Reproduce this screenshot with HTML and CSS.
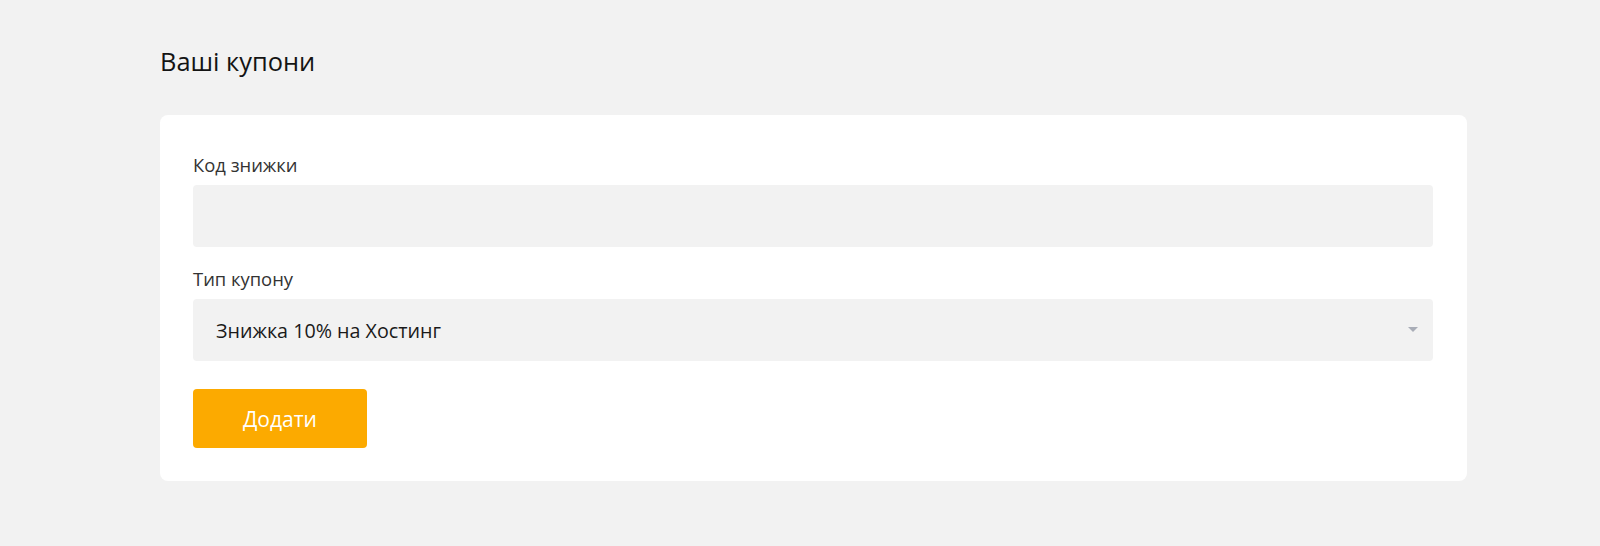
FILE: index.html
```html
<!DOCTYPE html>
<html lang="uk">
<head>
  <meta charset="UTF-8">
  <meta name="viewport" content="width=device-width, initial-scale=1.0">
  <title>Ваші купони</title>
  <link rel="stylesheet" href="styles.css">
</head>
<body>
  <main class="page">
    <h1 class="titulo">Ваші купони</h1>
    <form class="cartao">
      <div class="campo">
        <label for="codigo">Код знижки</label>
        <input type="text" id="codigo" autocomplete="off">
      </div>
      <div class="campo">
        <label for="tipo">Тип купону</label>
        <div class="seletor">
          <select id="tipo">
            <option>Знижка 10% на Хостинг</option>
          </select>
          <span class="seta"></span>
        </div>
      </div>
      <button type="submit" class="botao">Додати</button>
    </form>
  </main>
</body>
</html>
```

FILE: styles.css
```css
:root {
  --fundo: #f2f2f2;
  --branco: #fff;
  --texto: #1a1a1a;
  --rotulo: #333;
  --campo: #f2f2f2;
  --laranja: #fcaa00;
  --seta: #a9adb7;
}

* {
  box-sizing: border-box;
  margin: 0;
  padding: 0;
}

body {
  background-color: var(--fundo);
  font-family: 'Open Sans', 'Noto Sans', sans-serif;
  color: var(--texto);
}

.page {
  width: 1307px;
  margin-left: 160px;
  padding-top: 43px;
}

.titulo {
  font-size: 25.4px;
  line-height: 36px;
  font-weight: 400;
  color: #141414;
  margin-bottom: 36px;
}

.cartao {
  background-color: var(--branco);
  border-radius: 8px;
  padding: 38px 34px 33px 33px;
  display: flex;
  flex-direction: column;
}

.campo {
  display: flex;
  flex-direction: column;
  gap: 8px;
  margin-bottom: 20px;

  label {
    font-size: 18.4px;
    line-height: 24px;
    color: var(--rotulo);
  }

  input,
  select {
    height: 62px;
    width: 100%;
    border: none;
    border-radius: 4px;
    background-color: var(--campo);
    font-family: inherit;
    font-size: 19.7px;
    color: var(--texto);
    padding: 0 23px;
    outline: none;
    appearance: none;
  }
}

.seletor {
  position: relative;

  .seta {
    position: absolute;
    right: 15px;
    top: 28px;
    width: 0;
    height: 0;
    border-left: 5px solid transparent;
    border-right: 5px solid transparent;
    border-top: 5px solid var(--seta);
  }
}

.botao {
  margin-top: 8px;
  width: 174px;
  height: 59px;
  border: none;
  border-radius: 4px;
  background-color: var(--laranja);
  color: var(--branco);
  font-family: inherit;
  font-size: 21px;
  cursor: pointer;
}
```
